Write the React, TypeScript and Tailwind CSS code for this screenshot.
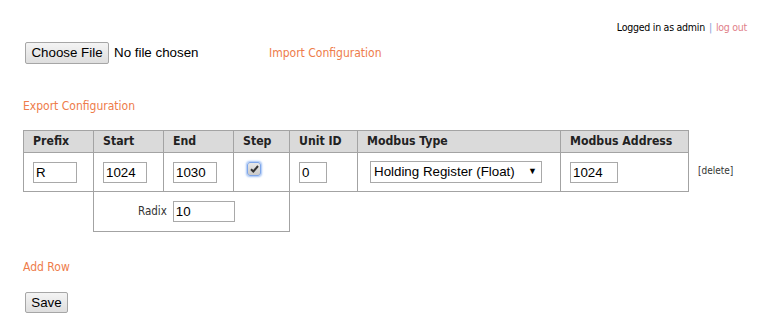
import React from "react";

const F = "font-['DejaVu_Sans_Condensed','DejaVu_Sans',sans-serif]";
const A = "font-['Liberation_Sans',Arial,sans-serif]";

function Input({ w, value }: { w: string; value: string }) {
  return (
    <div
      className={`${w} h-[21px] border border-[#a9a9a9] bg-white ${A} text-[13.33px] text-black leading-[19px] pl-[2px]`}
    >
      {value}
    </div>
  );
}

export default function App() {
  const th = "border border-[#a3a3a3] bg-[#dadada] text-left font-bold text-[12.2px] text-[#222] pl-[9px] h-[22px] p-0";
  const td = "border border-[#a3a3a3] pl-[9px] h-[39px] p-0 align-middle";
  return (
    <div className={`w-[757px] h-[326px] bg-white ${F} text-[12px] text-[#222] overflow-hidden`}>
      <div className="flex justify-end pr-[10px] pt-[21px] text-[10.5px] tracking-[-0.25px] leading-[13px]">
        <span className="text-black">Logged in as admin</span>
        <span className="text-[#7fa0d6] mx-[4px]">|</span>
        <span className="text-[#df7f8a]">log out</span>
      </div>
      <div className="flex items-center pl-[25px] mt-[8px] h-[22px]">
        <div className="w-[244px] flex items-center">
          <div
            className={`w-[84px] h-[22px] border border-[#a6a6a6] rounded-[2px] bg-gradient-to-b from-[#f4f4f4] to-[#dedede] ${A} text-[13.33px] text-black flex items-center justify-center`}
          >
            Choose File
          </div>
          <span className={`${A} text-[13.33px] text-black ml-[5px]`}>No file chosen</span>
        </div>
        <span className="text-[#ee7c4a]">Import Configuration</span>
      </div>
      <div className="pl-[23px] mt-[35px] leading-[14px] text-[#ee7c4a]">Export Configuration</div>
      <table className="ml-[23px] mt-[17px] border-collapse table-fixed">
        <colgroup>
          <col className="w-[70px]" />
          <col className="w-[70px]" />
          <col className="w-[70px]" />
          <col className="w-[56px]" />
          <col className="w-[68px]" />
          <col className="w-[203px]" />
          <col className="w-[128px]" />
          <col className="w-[60px]" />
        </colgroup>
        <tbody>
          <tr>
            <th className={th}>Prefix</th>
            <th className={th}>Start</th>
            <th className={th}>End</th>
            <th className={th}>Step</th>
            <th className={th}>Unit ID</th>
            <th className={th}>Modbus Type</th>
            <th className={th}>Modbus Address</th>
            <th className="p-0"></th>
          </tr>
          <tr>
            <td className={td}>
              <Input w="w-[44px]" value="R" />
            </td>
            <td className={td}>
              <Input w="w-[44px]" value="1024" />
            </td>
            <td className={td}>
              <Input w="w-[44px]" value="1030" />
            </td>
            <td className={`${td} align-top`}>
              <div className="ml-[4px] mt-[9px] w-[14px] h-[14px] rounded-[3px] border border-[#7ea6ea] shadow-[0_0_2px_1px_#9fc0f5] bg-gradient-to-b from-[#e8e8e8] to-[#c9c9c9] flex items-center justify-center">
                <svg width="9" height="8" viewBox="0 0 9 8">
                  <path d="M1 4.2 L3.3 6.5 L8 1" stroke="#333" strokeWidth="2" fill="none" />
                </svg>
              </div>
            </td>
            <td className={td}>
              <Input w="w-[28px]" value="0" />
            </td>
            <td className={`${td} pl-[12px]`}>
              <div
                className={`w-[172px] h-[22px] border border-[#a9a9a9] bg-white ${A} text-[13.33px] text-black flex items-center justify-between pl-[3px] pr-[4px]`}
              >
                <span>Holding Register (Float)</span>
                <span className="text-[9px]">▼</span>
              </div>
            </td>
            <td className={td}>
              <Input w="w-[48px]" value="1024" />
            </td>
            <td className="p-0 pl-[9px] align-middle text-[10px] text-[#333] leading-[12px] pb-[3px]">[delete]</td>
          </tr>
          <tr>
            <td className="p-0"></td>
            <td colSpan={3} className="border border-[#a3a3a3] h-[40px] p-0">
              <div className="flex items-center pl-[44px]">
                <span className="text-[#333] text-[11.5px] mr-[6px]">Radix</span>
                <Input w="w-[62px]" value="10" />
              </div>
            </td>
            <td className="p-0"></td>
            <td className="p-0"></td>
            <td className="p-0"></td>
            <td className="p-0"></td>
          </tr>
        </tbody>
      </table>
      <div className="pl-[23px] mt-[28px] leading-[14px] text-[#ee7c4a]">Add Row</div>
      <div className="pl-[25px] mt-[18px]">
        <div
          className={`w-[43px] h-[21px] border border-[#a6a6a6] rounded-[2px] bg-gradient-to-b from-[#f4f4f4] to-[#dedede] ${A} text-[13.33px] text-black flex items-center justify-center`}
        >
          Save
        </div>
      </div>
    </div>
  );
}
